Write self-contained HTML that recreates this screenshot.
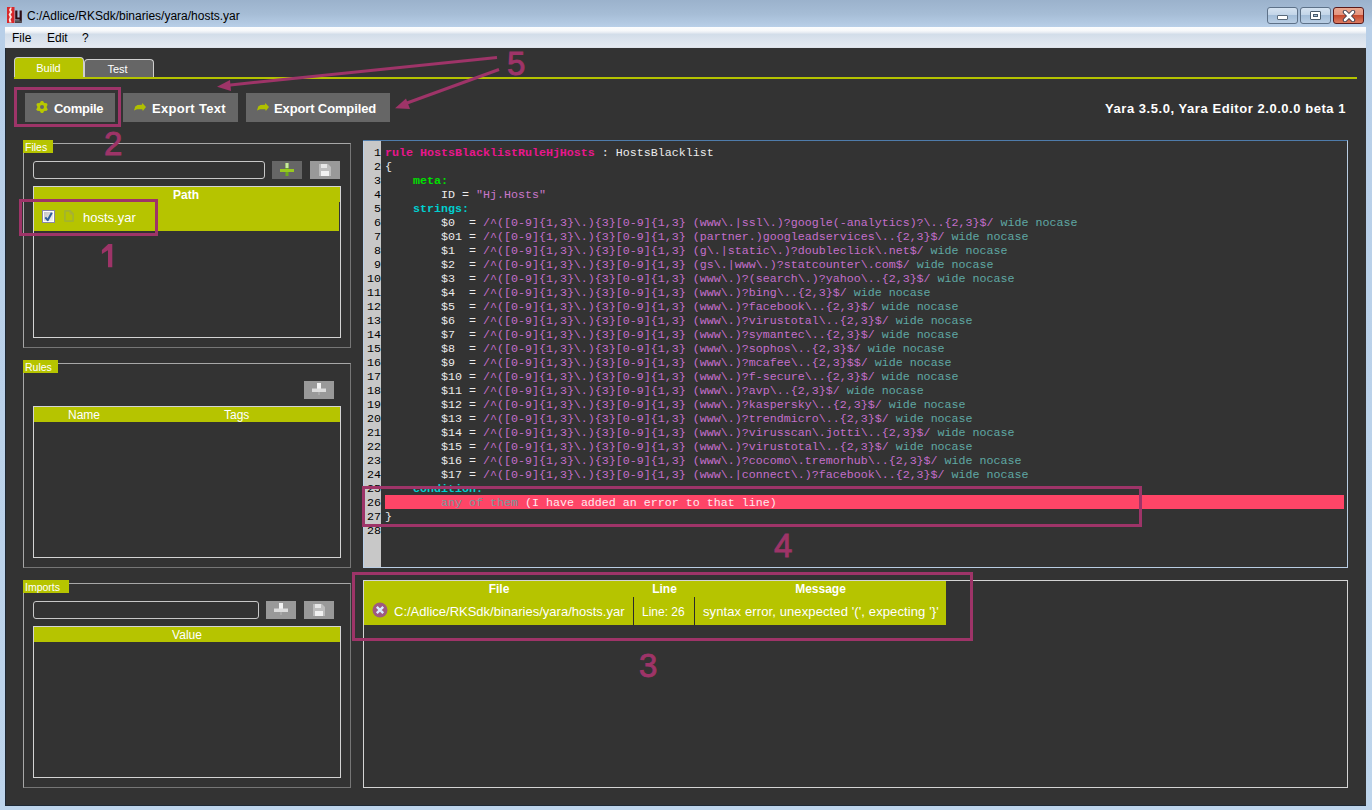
<!DOCTYPE html>
<html><head><meta charset="utf-8">
<style>
*{box-sizing:border-box;margin:0;padding:0}
html,body{width:1372px;height:810px;overflow:hidden}
body{position:relative;font-family:"Liberation Sans",sans-serif;background:#bcd3ea}
.abs{position:absolute}
#frame{left:0;top:0;width:1372px;height:810px;background:linear-gradient(#9bb2cc 0px,#a6bdd6 14px,#b8cfe8 27px,#bed5ec 810px)}
#title{left:27px;top:8px;font-size:12px;color:#000;white-space:pre;line-height:16px}
#menubar{left:5px;top:27px;width:1361px;height:21px;background:linear-gradient(#fcfdfe 0px,#f6f8fa 4px,#e9eef4 5px,#e6ebf2 6px,#d2dde9 7px,#dce4ee 14px,#e4e9f1 20px,#d8dee6 21px)}
.menu{top:3px;font-size:12px;line-height:16px;color:#000}
#content{left:5px;top:48px;width:1361px;height:758px;background:#333}
.wbtn{top:7px;height:17px;border:1px solid #5d7188;border-radius:3px;background:linear-gradient(#d5e3f1 0,#c3d5e8 45%,#a3bdd8 50%,#b9cee4 100%)}
.tab{border:1px solid #cfcfcf;border-bottom:none;border-radius:4px 4px 0 0;color:#fff;font-size:11px;text-align:center}
.btn{background:#666;color:#fff;font-weight:bold;font-size:13px;white-space:pre}
.grp{border:1px solid;border-color:#a8a8a8 #767676 #767676 #a8a8a8}
.lbl{background:#b6c400;color:#fff;font-size:10.5px;line-height:15px;padding-left:2px;overflow:hidden;white-space:pre}
.inp{border:1px solid #c8c8c8;border-radius:3px}
.tbl{border:1px solid #d4d4d4}
.hdr{background:#b6c400;color:#fff;font-size:12px;line-height:15px;white-space:pre}
.sbtn{background:#999}
.num{color:#9e3468;font-size:33px;line-height:33px;-webkit-text-stroke:0.9px #9e3468}
#editor{left:363px;top:140px;width:985px;height:428px;border-top:1px solid #4f7cab;border-right:1px solid #b9cde3;border-bottom:1px solid #b9cde3;background:#333;overflow:hidden}
#gutter{left:0;top:0;width:18px;height:427px;background:#c8c8c8;border-left:1px solid #b8d0ea}
.ln{height:14px;line-height:14px;white-space:pre}
#nums{left:0;top:5px;width:18px;text-align:right;font-family:"Liberation Mono",monospace;font-size:11.667px;color:#000}
#code{left:22px;top:5px;font-family:"Liberation Mono",monospace;font-size:11.667px;color:#eee}
.k{color:#e8168c;font-weight:bold}
.w{color:#ececec}
.g{color:#00e000;font-weight:bold}
.c{color:#00cfcf;font-weight:bold}
.s{color:#c977c9}
.r{color:#c46fcb}
.m{color:#5fa8a3}
.a{color:#739c9c}
.e{color:#ffe8ee}
.pbox{border:3px solid #9e3468}
</style></head><body>
<div id="frame" class="abs"></div>
<!-- app icon -->
<svg class="abs" style="left:6px;top:6px" width="18" height="18" viewBox="0 0 18 18">
<rect x="1" y="1" width="7.5" height="16" fill="#d8282a"/>
<path d="M4.2 1.5 L5.8 1.5 L5 4 L6.3 6 L4.6 8.5 L6 11 L4.6 13.5 L5.6 16.5 L3.4 16.5 L2.8 13.5 L3.8 11 L2.6 8.5 L4 6 L3 4 Z" fill="#fbe6e0"/>
<path d="M9.2 4.5 L11.4 4.5 L11.4 11.5 L13.6 11.5 L13.6 4.5 L15.8 4.5 L15.8 16.8 L9 16.8 L9 14.6 L13.6 14.6 L13.6 13.6 L9.2 13.6 Z" fill="#2d0c12"/>
<rect x="9" y="14.6" width="6.8" height="1.6" fill="#555"/>
</svg>
<div id="title" class="abs">C:/Adlice/RKSdk/binaries/yara/hosts.yar</div>
<!-- window buttons -->
<div class="abs wbtn" style="left:1267px;width:31px"><div class="abs" style="left:9px;top:7px;width:11px;height:5px;background:#fff;border:1px solid #5a6a7a;border-radius:1px"></div></div>
<div class="abs wbtn" style="left:1300px;width:31px"><div class="abs" style="left:9px;top:3px;width:11px;height:9px;background:#fff;border:1px solid #4a5a6a;border-radius:1px"><div class="abs" style="left:2px;top:2px;width:5px;height:3px;background:#a3bdd8;border:1px solid #4a5a6a"></div></div></div>
<div class="abs wbtn" style="left:1333px;width:31px;border-color:#5a1a1a;background:linear-gradient(#eaa890 0,#e59580 45%,#c64a2e 50%,#dc7c62 100%)"><svg class="abs" style="left:8px;top:2px" width="14" height="12" viewBox="0 0 14 12"><path d="M3 2 L11 10 M11 2 L3 10" stroke="#3a3a4a" stroke-width="4.4" stroke-linecap="round"/><path d="M3 2 L11 10 M11 2 L3 10" stroke="#fff" stroke-width="2.6" stroke-linecap="round"/></svg></div>
<div id="menubar" class="abs">
 <div class="abs menu" style="left:7px">File</div>
 <div class="abs menu" style="left:42px">Edit</div>
 <div class="abs menu" style="left:77px">?</div>
</div>
<div id="content" class="abs"></div>
<div class="abs" style="left:5px;top:805px;width:1361px;height:1px;background:#1f2a36"></div>
<div class="abs" style="left:5px;top:48px;width:1px;height:758px;background:#1f2a36"></div>

<!-- tabs -->
<div class="abs tab" style="left:14px;top:57px;width:70px;height:20px;background:#b6c400;line-height:20px;text-indent:-1px">Build</div>
<div class="abs tab" style="left:84px;top:59px;width:70px;height:18px;background:#666;line-height:18px;text-indent:-3px">Test</div>
<div class="abs" style="left:14px;top:77px;width:1343px;height:2px;background:#b4c300"></div>

<!-- buttons -->
<div class="abs btn" style="left:25px;top:93px;width:90px;height:29px"></div>
<div class="abs btn" style="left:123px;top:93px;width:115px;height:29px"></div>
<div class="abs btn" style="left:246px;top:93px;width:144px;height:29px"></div>
<svg class="abs" style="left:36px;top:101px" width="12" height="12" viewBox="0 0 12 12"><g fill="#b8c800"><circle cx="6.00" cy="1.60" r="1.7"/><circle cx="9.81" cy="3.80" r="1.7"/><circle cx="9.81" cy="8.20" r="1.7"/><circle cx="6.00" cy="10.40" r="1.7"/><circle cx="2.19" cy="8.20" r="1.7"/><circle cx="2.19" cy="3.80" r="1.7"/></g><circle cx="6" cy="6" r="3.4" fill="none" stroke="#b8c800" stroke-width="2.8"/></svg>
<div class="abs" style="left:54px;top:101px;font-weight:bold;font-size:13px;line-height:16px;color:#fff;white-space:pre;letter-spacing:-0.3px">Compile</div>
<svg class="abs" style="left:134px;top:102px" width="13" height="10" viewBox="0 0 13 10"><path fill="#b0c000" d="M0 8.5 L1.2 4.5 L3.5 3 L8 2.7 L8.3 1 L12 5 L8.8 9 L8.3 7.3 L3 7.3 Z"/></svg>
<div class="abs" style="left:152px;top:101px;font-weight:bold;font-size:13px;line-height:16px;color:#fff;white-space:pre;letter-spacing:0.3px">Export Text</div>
<svg class="abs" style="left:257px;top:102px" width="13" height="10" viewBox="0 0 13 10"><path fill="#b0c000" d="M0 8.5 L1.2 4.5 L3.5 3 L8 2.7 L8.3 1 L12 5 L8.8 9 L8.3 7.3 L3 7.3 Z"/></svg>
<div class="abs" style="left:274px;top:101px;font-weight:bold;font-size:13px;line-height:16px;color:#fff;white-space:pre;letter-spacing:-0.13px">Export Compiled</div>
<div class="abs" style="left:1105px;top:101px;font-weight:bold;font-size:13px;line-height:16px;color:#fff;white-space:pre;letter-spacing:0.55px">Yara 3.5.0, Yara Editor 2.0.0.0 beta 1</div>

<!-- Files group -->
<div class="abs grp" style="left:23px;top:143px;width:328px;height:205px"></div>
<div class="abs lbl" style="left:23px;top:140px;width:30px;height:13px">Files</div>
<div class="abs inp" style="left:33px;top:161px;width:232px;height:18px"></div>
<div class="abs sbtn" style="left:272px;top:161px;width:30px;height:18px;background:#666"></div>
<svg class="abs" style="left:279px;top:163px" width="16" height="14" viewBox="0 0 16 14"><rect x="6.5" y="0" width="3" height="13" fill="#6dab1a"/><rect x="6.5" y="0" width="3" height="5" fill="#c8e8a0"/><rect x="1" y="6" width="14" height="3" fill="#98c820"/></svg>
<div class="abs sbtn" style="left:310px;top:161px;width:30px;height:18px"></div>
<svg class="abs" style="left:319px;top:164px" width="12" height="12" viewBox="0 0 12 12"><path fill="#bdbdbd" d="M0 0 H9 L12 3 V12 H0 Z"/><rect x="2" y="0" width="6" height="4" fill="#e6e6e6"/><rect x="2" y="7" width="8" height="5" fill="#f2f2f2"/></svg>
<div class="abs tbl" style="left:33px;top:186px;width:308px;height:152px"></div>
<div class="abs hdr" style="left:34px;top:187px;width:306px;height:15px;padding-top:1px;text-align:center;font-weight:bold;text-indent:-2px">Path</div>
<div class="abs" style="left:34px;top:202px;width:305px;height:29px;background:#b6c400"></div>
<svg class="abs" style="left:42px;top:210px" width="13" height="13" viewBox="0 0 13 13"><rect x="0.5" y="0.5" width="12" height="12" fill="#fff" stroke="#8a88a8"/><defs><linearGradient id="cg" x1="0" y1="0" x2="1" y2="1"><stop offset="0" stop-color="#c4c4c4"/><stop offset="1" stop-color="#f4f4f4"/></linearGradient></defs><rect x="2" y="2" width="9" height="9" fill="url(#cg)"/><path d="M3.3 7.3 L5.7 10.2 L9.8 2.8" stroke="#2f5e9c" stroke-width="2" fill="none" stroke-linejoin="round"/></svg>
<svg class="abs" style="left:64px;top:210px" width="10" height="12" viewBox="0 0 10 12"><path d="M1.8 0.8 H6 L9.2 4 V10 Q9.2 11.2 8 11.2 H1.8 Q0.8 11.2 0.8 10 V2 Q0.8 0.8 1.8 0.8 Z" fill="none" stroke="#a3b42e" stroke-width="1.9"/><path d="M6 1 V4 H9" fill="none" stroke="#b0a060" stroke-width="0.6"/></svg>
<div class="abs" style="left:83px;top:209.5px;font-size:13px;line-height:16px;color:#fff;white-space:pre">hosts.yar</div>

<!-- Rules group -->
<div class="abs grp" style="left:23px;top:363px;width:328px;height:205px"></div>
<div class="abs lbl" style="left:23px;top:360px;width:35px;height:13px">Rules</div>
<div class="abs sbtn" style="left:304px;top:381px;width:30px;height:18px"></div>
<svg class="abs" style="left:311px;top:383px" width="16" height="14" viewBox="0 0 16 14"><rect x="6" y="0" width="4" height="6" fill="#f2f2f2"/><rect x="1" y="5.5" width="14" height="3.5" fill="#dcdcdc"/><rect x="7" y="9" width="2" height="3" fill="#a8a8a8"/></svg>
<div class="abs tbl" style="left:33px;top:406px;width:308px;height:152px"></div>
<div class="abs hdr" style="left:34px;top:407px;width:306px;height:15px"><span class="abs" style="left:34px;top:1px">Name</span><span class="abs" style="left:190px;top:1px">Tags</span></div>

<!-- Imports group -->
<div class="abs grp" style="left:23px;top:583px;width:328px;height:205px"></div>
<div class="abs lbl" style="left:23px;top:580px;width:46px;height:13px">Imports</div>
<div class="abs inp" style="left:33px;top:601px;width:226px;height:18px"></div>
<div class="abs sbtn" style="left:266px;top:601px;width:30px;height:18px"></div>
<svg class="abs" style="left:273px;top:603px" width="16" height="14" viewBox="0 0 16 14"><rect x="6" y="0" width="4" height="6" fill="#f2f2f2"/><rect x="1" y="5.5" width="14" height="3.5" fill="#dcdcdc"/><rect x="7" y="9" width="2" height="3" fill="#a8a8a8"/></svg>
<div class="abs sbtn" style="left:304px;top:601px;width:30px;height:18px"></div>
<svg class="abs" style="left:313px;top:604px" width="12" height="12" viewBox="0 0 12 12"><path fill="#bdbdbd" d="M0 0 H9 L12 3 V12 H0 Z"/><rect x="2" y="0" width="6" height="4" fill="#e6e6e6"/><rect x="2" y="7" width="8" height="5" fill="#f2f2f2"/></svg>
<div class="abs tbl" style="left:33px;top:626px;width:308px;height:152px"></div>
<div class="abs hdr" style="left:34px;top:627px;width:306px;height:15px;padding-top:1px;text-align:center">Value</div>

<!-- Editor -->
<div id="editor" class="abs">
 <div id="gutter" class="abs"></div>
 <div class="abs" style="left:22px;top:354px;width:959px;height:14px;background:#ff4567"></div>
 <div id="nums" class="abs"><div class="ln">1</div><div class="ln">2</div><div class="ln">3</div><div class="ln">4</div><div class="ln">5</div><div class="ln">6</div><div class="ln">7</div><div class="ln">8</div><div class="ln">9</div><div class="ln">10</div><div class="ln">11</div><div class="ln">12</div><div class="ln">13</div><div class="ln">14</div><div class="ln">15</div><div class="ln">16</div><div class="ln">17</div><div class="ln">18</div><div class="ln">19</div><div class="ln">20</div><div class="ln">21</div><div class="ln">22</div><div class="ln">23</div><div class="ln">24</div><div class="ln">25</div><div class="ln">26</div><div class="ln">27</div><div class="ln">28</div></div>
 <div id="code" class="abs"><div class="ln"><span class="k">rule HostsBlacklistRuleHjHosts</span><span class="w"> : HostsBlacklist</span></div>
<div class="ln"><span class="w">{</span></div>
<div class="ln"><span class="w">    </span><span class="g">meta:</span></div>
<div class="ln"><span class="w">        ID = </span><span class="s">"Hj.Hosts"</span></div>
<div class="ln"><span class="w">    </span><span class="c">strings:</span></div>
<div class="ln"><span class="w">        $0  = </span><span class="r">/^([0-9]{1,3}\.){3}[0-9]{1,3} (www\.|ssl\.)?google(-analytics)?\..{2,3}$/</span><span class="m"> wide nocase</span></div>
<div class="ln"><span class="w">        $01 = </span><span class="r">/^([0-9]{1,3}\.){3}[0-9]{1,3} (partner.)googleadservices\..{2,3}$/</span><span class="m"> wide nocase</span></div>
<div class="ln"><span class="w">        $1  = </span><span class="r">/^([0-9]{1,3}\.){3}[0-9]{1,3} (g\.|static\.)?doubleclick\.net$/</span><span class="m"> wide nocase</span></div>
<div class="ln"><span class="w">        $2  = </span><span class="r">/^([0-9]{1,3}\.){3}[0-9]{1,3} (gs\.|www\.)?statcounter\.com$/</span><span class="m"> wide nocase</span></div>
<div class="ln"><span class="w">        $3  = </span><span class="r">/^([0-9]{1,3}\.){3}[0-9]{1,3} (www\.)?(search\.)?yahoo\..{2,3}$/</span><span class="m"> wide nocase</span></div>
<div class="ln"><span class="w">        $4  = </span><span class="r">/^([0-9]{1,3}\.){3}[0-9]{1,3} (www\.)?bing\..{2,3}$/</span><span class="m"> wide nocase</span></div>
<div class="ln"><span class="w">        $5  = </span><span class="r">/^([0-9]{1,3}\.){3}[0-9]{1,3} (www\.)?facebook\..{2,3}$/</span><span class="m"> wide nocase</span></div>
<div class="ln"><span class="w">        $6  = </span><span class="r">/^([0-9]{1,3}\.){3}[0-9]{1,3} (www\.)?virustotal\..{2,3}$/</span><span class="m"> wide nocase</span></div>
<div class="ln"><span class="w">        $7  = </span><span class="r">/^([0-9]{1,3}\.){3}[0-9]{1,3} (www\.)?symantec\..{2,3}$/</span><span class="m"> wide nocase</span></div>
<div class="ln"><span class="w">        $8  = </span><span class="r">/^([0-9]{1,3}\.){3}[0-9]{1,3} (www\.)?sophos\..{2,3}$/</span><span class="m"> wide nocase</span></div>
<div class="ln"><span class="w">        $9  = </span><span class="r">/^([0-9]{1,3}\.){3}[0-9]{1,3} (www\.)?mcafee\..{2,3}$$/</span><span class="m"> wide nocase</span></div>
<div class="ln"><span class="w">        $10 = </span><span class="r">/^([0-9]{1,3}\.){3}[0-9]{1,3} (www\.)?f-secure\..{2,3}$/</span><span class="m"> wide nocase</span></div>
<div class="ln"><span class="w">        $11 = </span><span class="r">/^([0-9]{1,3}\.){3}[0-9]{1,3} (www\.)?avp\..{2,3}$/</span><span class="m"> wide nocase</span></div>
<div class="ln"><span class="w">        $12 = </span><span class="r">/^([0-9]{1,3}\.){3}[0-9]{1,3} (www\.)?kaspersky\..{2,3}$/</span><span class="m"> wide nocase</span></div>
<div class="ln"><span class="w">        $13 = </span><span class="r">/^([0-9]{1,3}\.){3}[0-9]{1,3} (www\.)?trendmicro\..{2,3}$/</span><span class="m"> wide nocase</span></div>
<div class="ln"><span class="w">        $14 = </span><span class="r">/^([0-9]{1,3}\.){3}[0-9]{1,3} (www\.)?virusscan\.jotti\..{2,3}$/</span><span class="m"> wide nocase</span></div>
<div class="ln"><span class="w">        $15 = </span><span class="r">/^([0-9]{1,3}\.){3}[0-9]{1,3} (www\.)?virustotal\..{2,3}$/</span><span class="m"> wide nocase</span></div>
<div class="ln"><span class="w">        $16 = </span><span class="r">/^([0-9]{1,3}\.){3}[0-9]{1,3} (www\.)?cocomo\.tremorhub\..{2,3}$/</span><span class="m"> wide nocase</span></div>
<div class="ln"><span class="w">        $17 = </span><span class="r">/^([0-9]{1,3}\.){3}[0-9]{1,3} (www\.|connect\.)?facebook\..{2,3}$/</span><span class="m"> wide nocase</span></div>
<div class="ln"><span class="w">    </span><span class="c">condition:</span></div>
<div class="ln"><span class="w">        </span><span class="a">any of them</span><span class="e"> (I have added an error to that line)</span></div>
<div class="ln"><span class="w">}</span></div>
<div class="ln"></div>
</div>
</div>

<!-- Error panel -->
<div class="abs tbl" style="left:363px;top:580px;width:985px;height:208px"></div>
<div class="abs" style="left:364px;top:581px;width:582px;height:44px;background:#b6c400"></div>
<div class="abs hdr" style="left:364px;top:582px;width:270px;height:15px;text-align:center;font-weight:bold">File</div>
<div class="abs hdr" style="left:634px;top:582px;width:61px;height:15px;text-align:center;font-weight:bold">Line</div>
<div class="abs hdr" style="left:695px;top:582px;width:251px;height:15px;text-align:center;font-weight:bold">Message</div>
<div class="abs" style="left:633px;top:597px;width:1px;height:28px;background:#2a2a2a"></div>
<div class="abs" style="left:694px;top:597px;width:1px;height:28px;background:#2a2a2a"></div>
<svg class="abs" style="left:372px;top:602px" width="16" height="16" viewBox="0 0 16 16"><circle cx="8" cy="8" r="7.5" fill="#9e5a80"/><path d="M4.8 4.8 L11.2 11.2 M11.2 4.8 L4.8 11.2" stroke="#d8ecff" stroke-width="2.4"/></svg>
<div class="abs" style="left:394px;top:604px;font-size:13px;line-height:16px;color:#fff;white-space:pre">C:/Adlice/RKSdk/binaries/yara/hosts.yar</div>
<div class="abs" style="left:642px;top:604px;font-size:12px;line-height:16px;color:#fff;white-space:pre">Line: 26</div>
<div class="abs" style="left:703px;top:604px;font-size:13px;line-height:16px;color:#fff;white-space:pre;letter-spacing:0.11px">syntax error, unexpected '(', expecting '}'</div>

<!-- annotations -->
<div class="abs pbox" style="left:14px;top:87px;width:107px;height:40px"></div>
<div class="abs pbox" style="left:19px;top:199px;width:139px;height:37px"></div>
<div class="abs pbox" style="left:362px;top:486px;width:780px;height:41px"></div>
<div class="abs pbox" style="left:352px;top:572px;width:621px;height:69px"></div>
<div class="abs num" style="left:104px;top:127px">2</div>
<svg class="abs" style="left:0;top:0" width="130" height="280"><path d="M108.3 244 L112.3 244 L112.3 267.2 L108 267.2 L108 250.2 L101.9 253.9 L101.9 250.1 Z" fill="#9e3468"/></svg>
<div class="abs num" style="left:774px;top:529px">4</div>
<div class="abs num" style="left:639px;top:649px">3</div>
<div class="abs num" style="left:507px;top:47px">5</div>
<svg class="abs" style="left:0;top:0" width="1372" height="810" viewBox="0 0 1372 810">
 <line x1="497" y1="57.5" x2="228" y2="85.2" stroke="#9e3468" stroke-width="3"/>
 <path d="M217 86.7 L230 80 L231 91 Z" fill="#9e3468"/>
 <line x1="499" y1="69.5" x2="407" y2="103" stroke="#9e3468" stroke-width="3"/>
 <path d="M395 108.3 L406 98.5 L410 109 Z" fill="#9e3468"/>
</svg>
</body></html>
